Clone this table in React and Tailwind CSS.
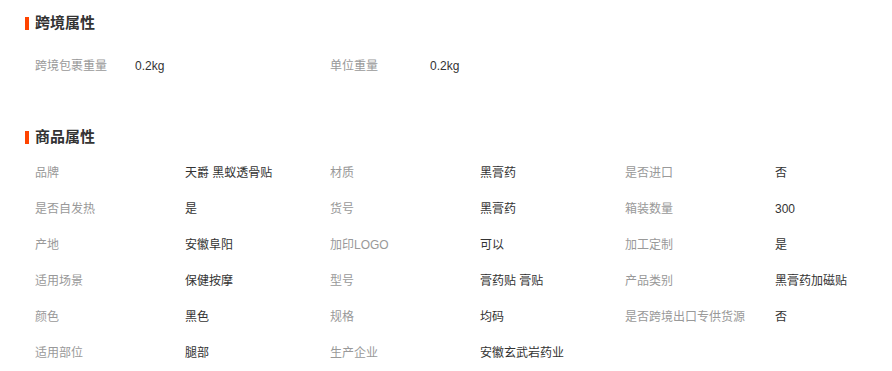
import { Fragment } from "react"

const crossBorder = [
  ["跨境包裹重量", "0.2kg"],
  ["单位重量", "0.2kg"],
]

const attrs = [
  ["品牌", "天爵 黑蚁透骨贴"],
  ["材质", "黑膏药"],
  ["是否进口", "否"],
  ["是否自发热", "是"],
  ["货号", "黑膏药"],
  ["箱装数量", "300"],
  ["产地", "安徽阜阳"],
  ["加印LOGO", "可以"],
  ["加工定制", "是"],
  ["适用场景", "保健按摩"],
  ["型号", "膏药贴 膏贴"],
  ["产品类别", "黑膏药加磁贴"],
  ["颜色", "黑色"],
  ["规格", "均码"],
  ["是否跨境出口专供货源", "否"],
  ["适用部位", "腿部"],
  ["生产企业", "安徽玄武岩药业"],
]

function Title({ children, className = "" }) {
  return (
    <div className={`flex items-center h-[20px] ${className}`}>
      <span className="w-[4px] h-[13px] bg-[#ff4400] mr-[6px]" />
      <h2 className="text-[15px] font-bold text-[#333] leading-[20px]">{children}</h2>
    </div>
  )
}

export default function App() {
  return (
    <div
      className="w-[892px] h-[371px] bg-white pl-[25px] pt-[13px] overflow-hidden"
      style={{ fontFamily: '"Liberation Sans", "Noto Sans CJK SC", sans-serif' }}
    >
      <Title>跨境属性</Title>

      {/* 跨境 */}
      <div className="grid grid-cols-[100px_195px_100px_1fr] pl-[10px] mt-[15px] text-[12px] leading-[36px]">
        {crossBorder.map(([k, v]) => (
          <Fragment key={k}>
            <div className="text-[#999]">{k}</div>
            <div className="text-[#333]">{v}</div>
          </Fragment>
        ))}
      </div>

      <Title className="mt-[43px]">商品属性</Title>

      {/* 商品 */}
      <div className="grid grid-cols-[150px_145px_150px_145px_150px_1fr] pl-[10px] mt-[8px] text-[12px] leading-[36px]">
        {attrs.map(([k, v]) => (
          <Fragment key={k}>
            <div className="text-[#999] whitespace-nowrap">{k}</div>
            <div className="text-[#333] whitespace-nowrap">{v}</div>
          </Fragment>
        ))}
      </div>
    </div>
  )
}
